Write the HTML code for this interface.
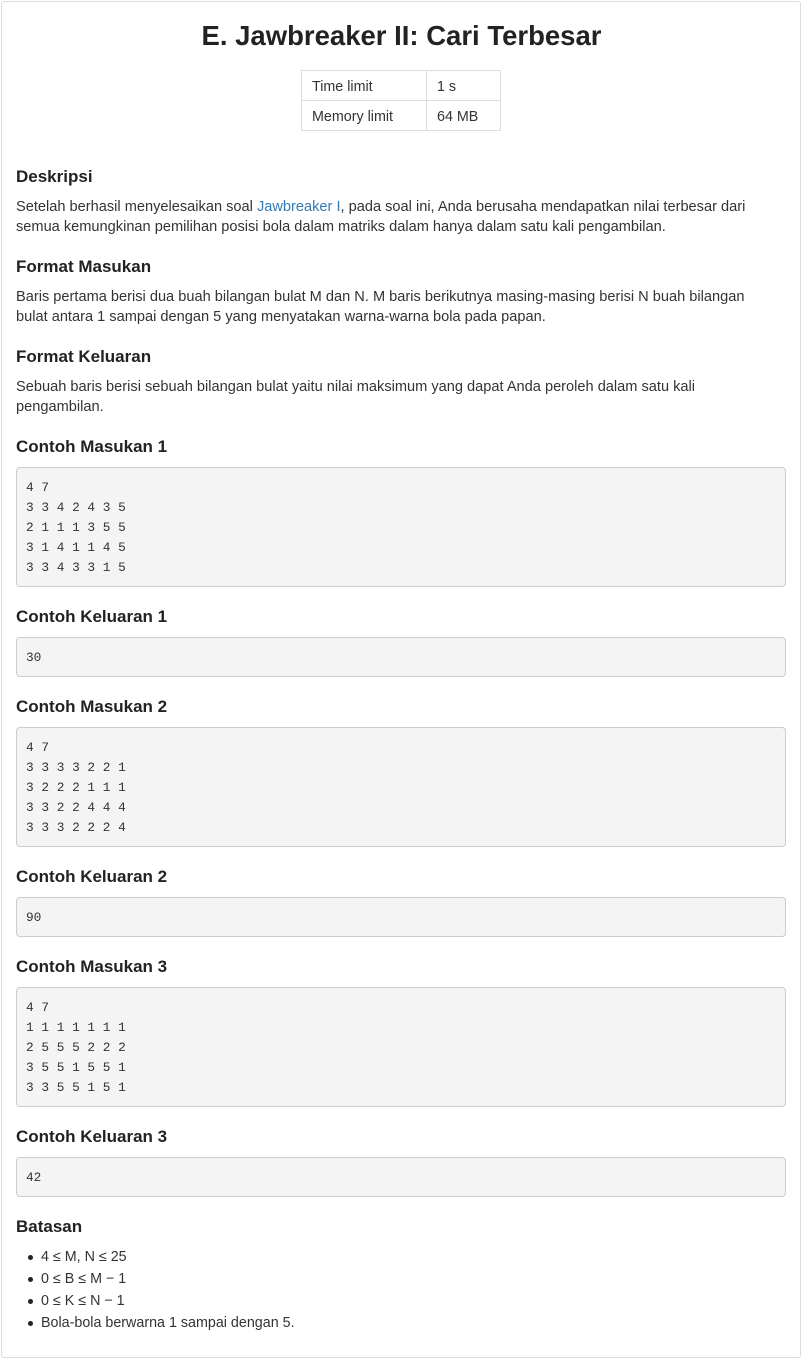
<!DOCTYPE html>
<html><head><meta charset="utf-8"><style>
*{margin:0;padding:0;box-sizing:border-box}
body{width:803px;height:1360px;background:#fff;position:relative;font-family:"Liberation Sans",sans-serif;color:#333;overflow:hidden}
.card{position:absolute;left:1px;top:1px;width:800px;height:1357px;border:1px solid #ddd;border-radius:3px}
h1{position:absolute;left:0;width:803px;text-align:center;top:16px;font-size:27.5px;line-height:40px;font-weight:bold;color:#222}
h3{position:absolute;left:16px;font-size:17px;font-weight:bold;line-height:24px;color:#222}
p{position:absolute;left:16px;font-size:14.6px;line-height:20px;white-space:nowrap;color:#333}
a{color:#337ab7;text-decoration:none}
pre{position:absolute;left:16px;width:770px;background:#f4f4f4;border:1px solid #ccc;border-radius:4px;padding:10px 9px;font-family:"Liberation Mono",monospace;font-size:12.8px;line-height:20px;color:#333}
table{position:absolute;left:301px;top:70px;border-collapse:collapse;font-size:14.3px;color:#333}
td{border:1px solid #ddd;height:30px;padding:2px 10px 0}
ul{position:absolute;left:41px;top:1246px;font-size:14.3px;line-height:22px}
ul li{list-style:none;position:relative;white-space:nowrap}
ul li:before{content:"";position:absolute;left:-13px;top:9px;width:5px;height:5px;border-radius:50%;background:#222}
</style></head><body>
<div class="card"></div>
<h1>E. Jawbreaker II: Cari Terbesar</h1>
<table><tr><td style="width:125px">Time limit</td><td style="width:74px">1 s</td></tr><tr><td>Memory limit</td><td>64 MB</td></tr></table>
<h3 style="top:165px">Deskripsi</h3>
<p style="top:197px">Setelah berhasil menyelesaikan soal <a>Jawbreaker I</a>, pada soal ini, Anda berusaha mendapatkan nilai terbesar dari<br>semua kemungkinan pemilihan posisi bola dalam matriks dalam hanya dalam satu kali pengambilan.</p>
<h3 style="top:255px">Format Masukan</h3>
<p style="top:287px">Baris pertama berisi dua buah bilangan bulat M dan N. M baris berikutnya masing-masing berisi N buah bilangan<br>bulat antara 1 sampai dengan 5 yang menyatakan warna-warna bola pada papan.</p>
<h3 style="top:345px">Format Keluaran</h3>
<p style="top:377px">Sebuah baris berisi sebuah bilangan bulat yaitu nilai maksimum yang dapat Anda peroleh dalam satu kali<br>pengambilan.</p>
<h3 style="top:435px">Contoh Masukan 1</h3>
<pre style="top:467px;height:120px">4 7
3 3 4 2 4 3 5
2 1 1 1 3 5 5
3 1 4 1 1 4 5
3 3 4 3 3 1 5</pre>
<h3 style="top:605px">Contoh Keluaran 1</h3>
<pre style="top:637px;height:40px">30</pre>
<h3 style="top:695px">Contoh Masukan 2</h3>
<pre style="top:727px;height:120px">4 7
3 3 3 3 2 2 1
3 2 2 2 1 1 1
3 3 2 2 4 4 4
3 3 3 2 2 2 4</pre>
<h3 style="top:865px">Contoh Keluaran 2</h3>
<pre style="top:897px;height:40px">90</pre>
<h3 style="top:955px">Contoh Masukan 3</h3>
<pre style="top:987px;height:120px">4 7
1 1 1 1 1 1 1
2 5 5 5 2 2 2
3 5 5 1 5 5 1
3 3 5 5 1 5 1</pre>
<h3 style="top:1125px">Contoh Keluaran 3</h3>
<pre style="top:1157px;height:40px">42</pre>
<h3 style="top:1215px">Batasan</h3>
<ul><li>4 ≤ M, N ≤ 25</li><li>0 ≤ B ≤ M − 1</li><li>0 ≤ K ≤ N − 1</li><li>Bola-bola berwarna 1 sampai dengan 5.</li></ul>
</body></html>
